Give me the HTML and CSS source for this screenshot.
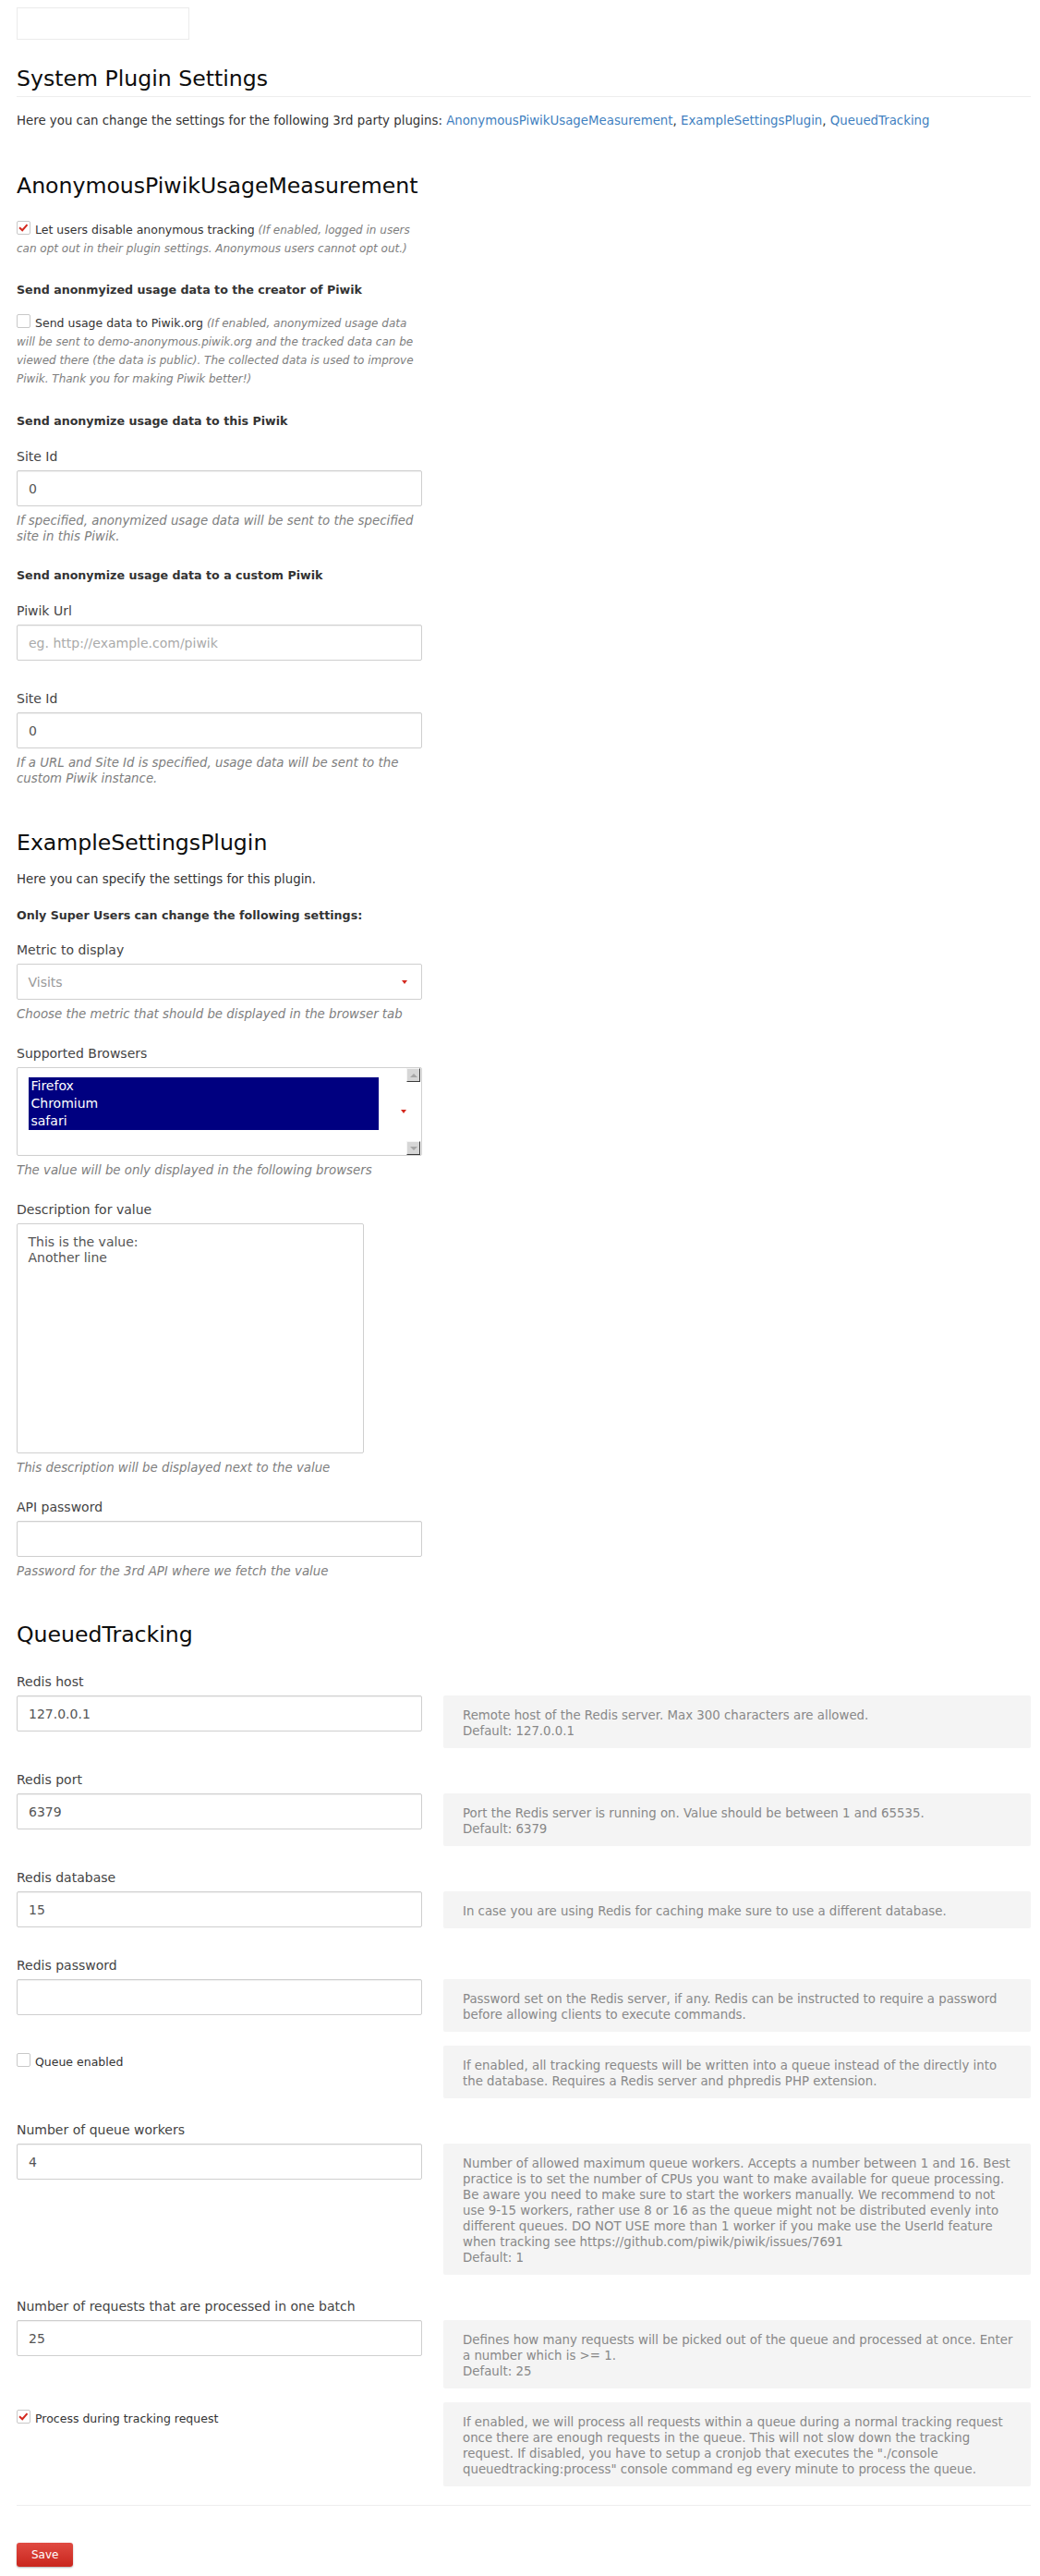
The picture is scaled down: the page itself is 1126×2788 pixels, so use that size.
FILE: index.html
```html
<!DOCTYPE html>
<html lang="en">
<head>
<meta charset="utf-8">
<title>System Plugin Settings</title>
<link rel="stylesheet" href="styles.css">
</head>
<body>
<main class="page">
  <div class="top-box"></div>
  <h2 class="page-title">System Plugin Settings</h2>
  <p class="intro">Here you can change the settings for the following 3rd party plugins: <a href="#AnonymousPiwikUsageMeasurement">AnonymousPiwikUsageMeasurement</a>, <a href="#ExampleSettingsPlugin">ExampleSettingsPlugin</a>, <a href="#QueuedTracking">QueuedTracking</a></p>

  <section class="plugin plugin-anon" id="AnonymousPiwikUsageMeasurement">
    <h2 class="plugin-title">AnonymousPiwikUsageMeasurement</h2>

    <div class="check-field cf-first">
      <label class="check"><span class="box is-checked"><svg width="13" height="13" viewBox="0 0 13 13"><path d="M2 6.2 L5.2 9.2 L10.5 3.2" fill="none" stroke="#d4291f" stroke-width="2"/></svg></span>Let users disable anonymous tracking <span class="desc">(If enabled, logged in users can opt out in their plugin settings. Anonymous users cannot opt out.)</span></label>
    </div>

    <h3 class="group-title gt-a">Send anonmyized usage data to the creator of Piwik</h3>

    <div class="check-field cf-second">
      <label class="check"><span class="box"></span>Send usage data to Piwik.org <span class="desc">(If enabled, anonymized usage data will be sent to demo-anonymous.piwik.org and the tracked data can be viewed there (the data is public). The collected data is used to improve Piwik. Thank you for making Piwik better!)</span></label>
    </div>

    <h3 class="group-title gt-b">Send anonymize usage data to this Piwik</h3>

    <div class="field after-title">
      <label class="field-label">Site Id</label>
      <input class="text-input" type="text" value="0" readonly>
      <p class="field-help">If specified, anonymized usage data will be sent to the specified site in this Piwik.</p>
    </div>

    <h3 class="group-title gt-c">Send anonymize usage data to a custom Piwik</h3>

    <div class="field after-title no-help">
      <label class="field-label">Piwik Url</label>
      <input class="text-input" type="text" placeholder="eg. http://example.com/piwik" readonly>
    </div>

    <div class="field">
      <label class="field-label">Site Id</label>
      <input class="text-input" type="text" value="0" readonly>
      <p class="field-help">If a URL and Site Id is specified, usage data will be sent to the custom Piwik instance.</p>
    </div>
  </section>

  <section class="plugin plugin-example" id="ExampleSettingsPlugin">
    <h2 class="plugin-title">ExampleSettingsPlugin</h2>
    <p class="plugin-intro">Here you can specify the settings for this plugin.</p>
    <h3 class="group-title gt-d">Only Super Users can change the following settings:</h3>

    <div class="field after-title">
      <label class="field-label">Metric to display</label>
      <div class="select"><span class="select-value">Visits</span><span class="caret"></span></div>
      <p class="field-help">Choose the metric that should be displayed in the browser tab</p>
    </div>

    <div class="field">
      <label class="field-label">Supported Browsers</label>
      <div class="multi">
        <div class="multi-list">
          <div class="opt">Firefox</div>
          <div class="opt">Chromium</div>
          <div class="opt">safari</div>
        </div>
        <span class="caret multi-caret"></span>
        <div class="scrollbar">
          <span class="sb-btn"><span class="sb-arrow-up"></span></span>
          <span class="sb-btn"><span class="sb-arrow-down"></span></span>
        </div>
      </div>
      <p class="field-help">The value will be only displayed in the following browsers</p>
    </div>

    <div class="field">
      <label class="field-label">Description for value</label>
      <textarea class="text-area" readonly>This is the value:
Another line</textarea>
      <p class="field-help">This description will be displayed next to the value</p>
    </div>

    <div class="field">
      <label class="field-label">API password</label>
      <input class="text-input" type="password" readonly>
      <p class="field-help">Password for the 3rd API where we fetch the value</p>
    </div>
  </section>

  <section class="plugin plugin-queued" id="QueuedTracking">
    <h2 class="plugin-title">QueuedTracking</h2>

    <div class="qfield qfirst">
      <label class="field-label">Redis host</label>
      <div class="qrow">
        <div class="qcell"><input class="text-input" type="text" value="127.0.0.1" readonly></div>
        <div class="help-box">Remote host of the Redis server. Max 300 characters are allowed.<br>Default: 127.0.0.1</div>
      </div>
    </div>

    <div class="qfield">
      <label class="field-label">Redis port</label>
      <div class="qrow">
        <div class="qcell"><input class="text-input" type="text" value="6379" readonly></div>
        <div class="help-box">Port the Redis server is running on. Value should be between 1 and 65535.<br>Default: 6379</div>
      </div>
    </div>

    <div class="qfield">
      <label class="field-label">Redis database</label>
      <div class="qrow">
        <div class="qcell"><input class="text-input" type="text" value="15" readonly></div>
        <div class="help-box">In case you are using Redis for caching make sure to use a different database.</div>
      </div>
    </div>

    <div class="qfield">
      <label class="field-label">Redis password</label>
      <div class="qrow">
        <div class="qcell"><input class="text-input" type="password" readonly></div>
        <div class="help-box">Password set on the Redis server, if any. Redis can be instructed to require a password before allowing clients to execute commands.</div>
      </div>
    </div>

    <div class="qfield qcheck">
      <div class="qrow">
        <div class="qcell check-cell"><label class="check"><span class="box"></span>Queue enabled</label></div>
        <div class="help-box">If enabled, all tracking requests will be written into a queue instead of the directly into the database. Requires a Redis server and phpredis PHP extension.</div>
      </div>
    </div>

    <div class="qfield">
      <label class="field-label">Number of queue workers</label>
      <div class="qrow">
        <div class="qcell"><input class="text-input" type="text" value="4" readonly></div>
        <div class="help-box">Number of allowed maximum queue workers. Accepts a number between 1 and 16. Best practice is to set the number of CPUs you want to make available for queue processing. Be aware you need to make sure to start the workers manually. We recommend to not use 9-15 workers, rather use 8 or 16 as the queue might not be distributed evenly into different queues. DO NOT USE more than 1 worker if you make use the UserId feature when tracking see https://github.com/piwik/piwik/issues/7691<br>Default: 1</div>
      </div>
    </div>

    <div class="qfield">
      <label class="field-label">Number of requests that are processed in one batch</label>
      <div class="qrow">
        <div class="qcell"><input class="text-input" type="text" value="25" readonly></div>
        <div class="help-box">Defines how many requests will be picked out of the queue and processed at once. Enter a number which is &gt;= 1.<br>Default: 25</div>
      </div>
    </div>

    <div class="qfield qcheck">
      <div class="qrow">
        <div class="qcell check-cell"><label class="check"><span class="box is-checked"><svg width="13" height="13" viewBox="0 0 13 13"><path d="M2 6.2 L5.2 9.2 L10.5 3.2" fill="none" stroke="#d4291f" stroke-width="2"/></svg></span>Process during tracking request</label></div>
        <div class="help-box">If enabled, we will process all requests within a queue during a normal tracking request once there are enough requests in the queue. This will not slow down the tracking request. If disabled, you have to setup a cronjob that executes the "./console queuedtracking:process" console command eg every minute to process the queue.</div>
      </div>
    </div>
  </section>

  <hr class="divider">
  <div class="actions"><button class="save-btn" type="button">Save</button></div>
</main>
</body>
</html>
```

FILE: styles.css
```css
* {
  box-sizing: border-box;
}

html, body {
  margin: 0;
  padding: 0;
  background: #fff;
}

body {
  font-family: "DejaVu Sans", Verdana, sans-serif;
  font-size: 13.33px;
  line-height: 20px;
  color: #333;
}

a {
  color: #3f7fc0;
  text-decoration: none;
}

.page {
  display: flex;
  flex-direction: column;
  padding: 8px 10px 10px 18px;
}

.top-box {
  width: 187px;
  height: 35px;
  border: 1px solid #ebebeb;
}

.page-title {
  margin: 27px 0 0;
  padding-bottom: 4px;
  border-bottom: 1px solid #eee;
  font-size: 23.6px;
  line-height: 30px;
  font-weight: normal;
  color: #0d0d0d;
}

.intro {
  margin: 15.5px 0 0;
}

.plugin {
  display: flex;
  flex-direction: column;
}

.plugin-anon {
  margin-top: 45.5px;
}

.plugin-example {
  margin-top: 46px;
}

.plugin-queued {
  margin-top: 45px;
}

.plugin-title {
  margin: 0;
  font-size: 23.6px;
  line-height: 30px;
  font-weight: normal;
  color: #0d0d0d;
}

.plugin-intro {
  margin: 15px 0 0;
}

.group-title {
  margin: 0;
  font-size: 12.65px;
  line-height: 20px;
  font-weight: bold;
  color: #333;
}

.gt-a { margin-top: 25.7px; }
.gt-b { margin-top: 26px; }
.gt-c { margin-top: 24px; }
.gt-d { margin-top: 18.5px; }

.check-field {
  width: 439px;
}

.cf-first { margin-top: 22.8px; }
.cf-second { margin-top: 16px; }

.check {
  display: block;
  font-size: 12.5px;
  line-height: 20px;
  color: #333;
}

.box {
  display: inline-block;
  width: 15px;
  height: 15px;
  margin-right: 5px;
  vertical-align: -1px;
  border: 1px solid #c8c8c8;
  border-radius: 2px;
  background: #fff;
}

.box svg {
  display: block;
}

.desc {
  font-size: 12px;
  font-style: italic;
  color: #7e7e7e;
}

.field {
  display: flex;
  flex-direction: column;
  align-items: flex-start;
  width: 439px;
  margin-top: 23.5px;
}

.field.after-title {
  margin-top: 17.3px;
}

.field.no-help {
  padding-bottom: 7px;
}

.field-label {
  display: block;
  margin-bottom: 5.5px;
  font-size: 14px;
  line-height: 20px;
  color: #444;
}

.text-input {
  display: block;
  width: 439px;
  height: 39px;
  margin: 0;
  padding: 0 12px;
  border: 1px solid #cfcfcf;
  border-radius: 2px;
  box-shadow: inset 0 1px 1px rgba(0, 0, 0, 0.06);
  background: #fff;
  font-family: "DejaVu Sans", Verdana, sans-serif;
  font-size: 14px;
  color: #555;
  outline: none;
}

.text-input::placeholder {
  color: #aaa;
}

.field-help {
  margin: 7px 0 0;
  font-size: 13.33px;
  line-height: 17px;
  font-style: italic;
  color: #7e7e7e;
}

.select {
  display: flex;
  align-items: center;
  justify-content: space-between;
  width: 439px;
  height: 39px;
  padding: 0 15px 0 11.5px;
  border: 1px solid #cfcfcf;
  border-radius: 2px;
  background: #fff;
  font-size: 14px;
  color: #999;
}

.caret {
  display: block;
  width: 0;
  height: 0;
  border-left: 3.5px solid transparent;
  border-right: 3.5px solid transparent;
  border-top: 4px solid #d4291f;
}

.multi {
  display: flex;
  align-items: center;
  width: 439px;
  height: 96px;
  padding: 0 1px 0 12px;
  border: 1px solid #cfcfcf;
  border-radius: 2px;
  background: #fff;
}

.multi-list {
  align-self: flex-start;
  width: 379px;
  margin-top: 10px;
  background: #000080;
}

.opt {
  padding-left: 2.5px;
  font-size: 14px;
  line-height: 19px;
  color: #fff;
}

.multi-caret {
  margin-left: auto;
}

.scrollbar {
  display: flex;
  flex-direction: column;
  justify-content: space-between;
  align-self: stretch;
  width: 15px;
}

.sb-btn {
  display: flex;
  align-items: center;
  justify-content: center;
  width: 15px;
  height: 15px;
  border: 1px solid;
  border-color: #f4f4f4 #3a3a3a #3a3a3a #f4f4f4;
  background: #d6d6d6;
}

.sb-arrow-up,
.sb-arrow-down {
  display: block;
  width: 0;
  height: 0;
  border-left: 4px solid transparent;
  border-right: 4px solid transparent;
}

.sb-arrow-up {
  border-bottom: 4px solid #a6a6a6;
}

.sb-arrow-down {
  border-top: 4px solid #a6a6a6;
}

.text-area {
  display: block;
  width: 376px;
  height: 249px;
  margin: 0;
  padding: 11px 11.5px;
  border: 1px solid #cfcfcf;
  border-radius: 2px;
  background: #fff;
  font-family: "DejaVu Sans", Verdana, sans-serif;
  font-size: 14px;
  line-height: 17px;
  color: #555;
  resize: none;
  outline: none;
}

.qfield {
  display: flex;
  flex-direction: column;
  margin-top: 24px;
}

.qfield.qfirst {
  margin-top: 25.5px;
}

.qfield.qcheck {
  margin-top: 15.5px;
}

.qrow {
  display: grid;
  grid-template-columns: 439px 636px;
  column-gap: 23px;
  align-items: start;
}

.qcell {
  padding-bottom: 6.5px;
}

.check-cell {
  padding-top: 7.5px;
}

.help-box {
  padding: 12.5px 16px 10px 21px;
  border-radius: 2px;
  background: #f4f4f4;
  font-size: 13.33px;
  line-height: 17px;
  color: #888;
}

.divider {
  width: 100%;
  height: 1px;
  margin: 20.5px 0 0;
  border: 0;
  background: #eee;
}

.actions {
  display: flex;
  margin-top: 40px;
}

.save-btn {
  height: 26px;
  padding: 0 16px;
  border: 0;
  border-radius: 3px;
  background: linear-gradient(#e04a42, #c9261d);
  box-shadow: 0 1px 2px rgba(0, 0, 0, 0.3);
  font-family: "DejaVu Sans", Verdana, sans-serif;
  font-size: 12px;
  line-height: 26px;
  color: #fff;
  cursor: pointer;
}
```
